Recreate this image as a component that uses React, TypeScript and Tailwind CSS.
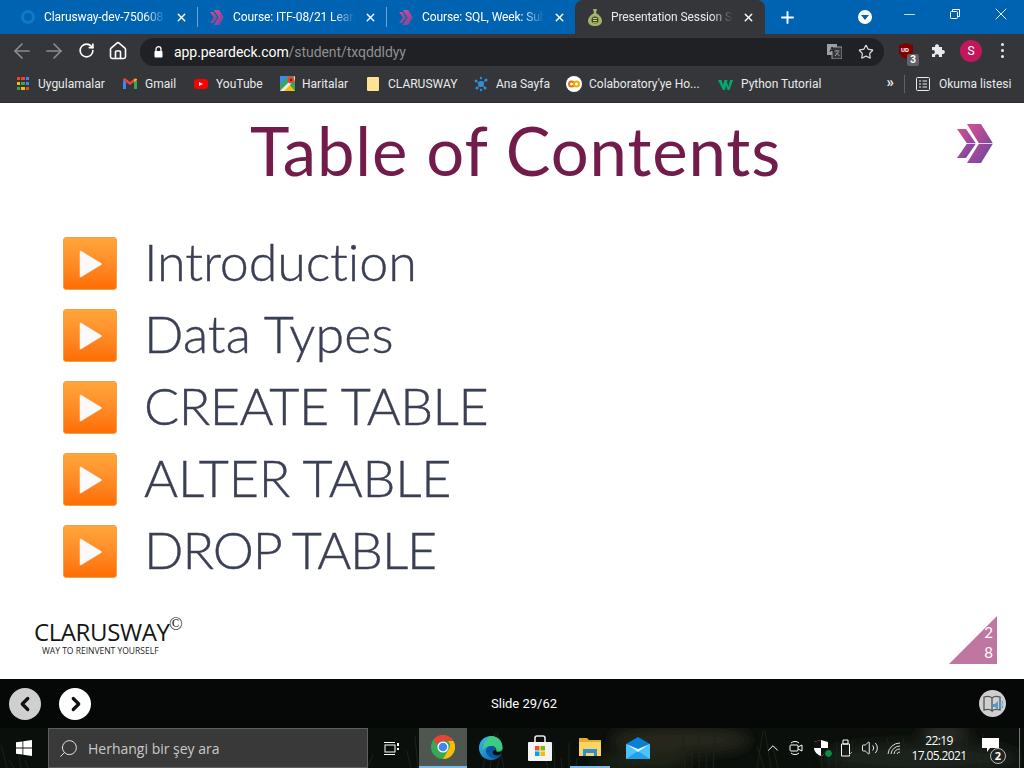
import React from "react";
import { ChevronLeft, ChevronRight, Search, ChevronUp, Volume2, Minus, Plus, X, Star, ArrowLeft, ArrowRight, RotateCw, Home } from "lucide-react";

const ui = { fontFamily: 'Roboto,"Open Sans",sans-serif' };
const deck = { fontFamily: 'Lato,"Open Sans",sans-serif' };

function Chevrons({ w = 14, h = 14, id, line }: { w?: number; h?: number; id: string; line?: boolean }) {
  return (
    <svg width={w} height={h} viewBox="0 0 36 39">
      <defs>
        <linearGradient id={id} x1="0" y1="0" x2="1" y2="1">
          <stop offset="0" stopColor="#d94f92" />
          <stop offset="0.5" stopColor="#a04a9c" />
          <stop offset="1" stopColor="#5c4a9e" />
        </linearGradient>
      </defs>
      <path d="M0 5h9l10 14.500-10 14.500H0l10-14.500z" fill={`url(#${id})`} />
      <path d="M10 0h14l12 19.500-12 19.500H10l12-19.500z" fill={`url(#${id})`} />
      {line && <path d="M2 19.500h34" stroke="#fff" strokeWidth="0.9" opacity="0.85" />}
    </svg>
  );
}

function Tab({ icon, title, width, divider, active }: { icon: React.ReactNode; title: string; width: string; divider?: boolean; active?: boolean }) {
  return (
    <div className={`relative flex items-center h-full shrink-0 ${width} ${active ? "bg-[#35363a] rounded-t-[8px] text-[#e8eaed]" : "text-white"}`}>
      <div className="w-[16px] h-[16px] flex items-center justify-center shrink-0">{icon}</div>
      <div className="ml-[8px] text-[12px] tracking-[-0.1px] whitespace-nowrap overflow-hidden w-[122px] [mask-image:linear-gradient(to_right,black_82%,transparent)]">{title}</div>
      <X size={13} strokeWidth={2.6} className="ml-[9px] shrink-0 text-white" />
      {divider && <div className="absolute right-0 top-[7px] w-px h-[20px] bg-[#6fa3d1]" />}
    </div>
  );
}

function Bookmark({ icon, label, w }: { icon: React.ReactNode; label: string; w: string }) {
  return (
    <div className={`flex items-center shrink-0 ${w}`}>
      <div className="w-[16px] h-[16px] flex items-center justify-center shrink-0">{icon}</div>
      <span className="ml-[7px] text-[12px] text-[#e8eaed] whitespace-nowrap">{label}</span>
    </div>
  );
}

function AppsIcon() {
  const c = ["#ea4335", "#ea4335", "#4285f4", "#fbbc04", "#34a853", "#4285f4", "#34a853", "#fbbc04", "#ea4335"];
  return (
    <div className="grid grid-cols-3 gap-[1.500px] w-[13px] h-[13px]">
      {c.map((x, i) => (
        <div key={i} style={{ background: x }} />
      ))}
    </div>
  );
}

function GmailIcon() {
  return (
    <svg width="14" height="11" viewBox="0 0 14 11">
      <path d="M0 2v9h3V4z" fill="#4285f4" />
      <path d="M14 2v9h-3V4z" fill="#34a853" />
      <path d="M0 2l7 5 7-5V1l-2-1-5 4-5-4-2 1z" fill="#ea4335" />
      <path d="M11 1l3 0v1l-3 2z" fill="#fbbc04" />
    </svg>
  );
}

function MapsIcon() {
  return (
    <svg width="15" height="15" viewBox="0 0 15 15">
      <rect width="15" height="15" rx="1" fill="#34a853" />
      <path d="M0 15L8 7l7 8z" fill="#fbbc04" />
      <path d="M0 0h9L0 9z" fill="#4285f4" opacity="0.9" />
      <path d="M0 15l15-15v4L4 15z" fill="#e8eaed" />
      <circle cx="11" cy="4" r="3.400" fill="#ea4335" />
      <circle cx="11" cy="4" r="1.200" fill="#7a1c14" />
    </svg>
  );
}

function ChromeIcon() {
  return (
    <svg width="24" height="24" viewBox="0 0 24 24">
      <circle cx="12" cy="12" r="12" fill="#34a853" />
      <path d="M12 0a12 12 0 0 1 10.400 6H12a6 6 0 0 0-5.600 3.800L2.300 4.900A12 12 0 0 1 12 0z" fill="#ea4335" />
      <path d="M22.400 6A12 12 0 0 1 12 24l5.200-9a6 6 0 0 0-.2-9z" fill="#fbbc04" />
      <circle cx="12" cy="12" r="5.600" fill="#fff" />
      <circle cx="12" cy="12" r="4.300" fill="#4285f4" />
    </svg>
  );
}

function EdgeIcon() {
  return (
    <svg width="24" height="24" viewBox="0 0 24 24">
      <defs>
        <linearGradient id="edgeG" x1="0" y1="0" x2="1" y2="1">
          <stop offset="0" stopColor="#35c1f1" />
          <stop offset="1" stopColor="#0c59a4" />
        </linearGradient>
      </defs>
      <path d="M12 0C5 0 0 5.500 0 12c0 7 5.500 12 12 12 3 0 6-1 8-3-4 1.500-10 0-11-5-.7-3.500 2-6 5-6 2.500 0 3.500 1.500 3.500 3h6C24 5 18.500 0 12 0z" fill="url(#edgeG)" />
      <path d="M12.500 0C18.500 0 24 5 23.500 13c-.2 2-3 3.200-6 2.500 0-3-1.500-5.500-5-5.500C8 10 5 12 3.500 14 4 7 8 1 12.500 0z" fill="#41d07b" opacity="0.9" />
      <path d="M12 10c-3 0-5.700 2.500-5 6 1 5 9 8 13 5 1-1 2-2 2.400-3-3 2-7 2-8.400-.5-1-2 0-3.500 3-3.500 0-2-2-4-5-4z" fill="#0b57a4" />
    </svg>
  );
}

function StoreIcon() {
  return (
    <svg width="24" height="26" viewBox="0 0 24 26">
      <path d="M7 7V3a2 2 0 0 1 2-2h6a2 2 0 0 1 2 2v4" fill="none" stroke="#e8e8e8" strokeWidth="1.600" />
      <rect x="0" y="7" width="24" height="19" rx="1" fill="#f4f4f4" />
      <rect x="7" y="11" width="4.500" height="4.500" fill="#f25022" />
      <rect x="12.500" y="11" width="4.500" height="4.500" fill="#7fba00" />
      <rect x="7" y="16.500" width="4.500" height="4.500" fill="#00a4ef" />
      <rect x="12.500" y="16.500" width="4.500" height="4.500" fill="#ffb900" />
    </svg>
  );
}

function ExplorerIcon() {
  return (
    <svg width="22" height="20" viewBox="0 0 22 20">
      <path d="M0 1h8l2 2h12v15H0z" fill="#e8a92c" />
      <path d="M0 5h22v14H0z" fill="#fcd462" />
      <path d="M4 12h14v7h-3v-3H7v3H4z" fill="#2a8fd8" />
    </svg>
  );
}

function MailIcon() {
  return (
    <svg width="24" height="22" viewBox="0 0 24 22">
      <path d="M0 7L12 0l12 7v15H0z" fill="#0a7fd6" />
      <path d="M0 7l12 8 12-8v15H0z" fill="#4cc2ff" />
      <path d="M0 22l12-8 12 8z" fill="#1fa1ec" />
      <path d="M0 7l12 8 12-8-12 5z" fill="#e4f6ff" />
    </svg>
  );
}

function PlayBox() {
  return (
    <div className="w-[54px] h-[53px] rounded-[3px] border border-[#f2a04a] bg-gradient-to-b from-[#ffa63b] to-[#ff6e00] flex items-center justify-center shrink-0">
      <svg width="24" height="28" viewBox="0 0 24 28" className="ml-[2px]">
        <path d="M1.500 1.500L22 14 1.500 26.500z" fill="#fafafa" stroke="#fafafa" strokeLinejoin="round" strokeWidth="1.500" />
      </svg>
    </div>
  );
}

const grass = Array.from({ length: 70 }, (_, i) => {
  const x = (i * 137) % 1024;
  const h = 8 + ((i * 53) % 30);
  const lean = ((i * 29) % 14) - 7;
  return { x, h, lean };
});

function Wallpaper() {
  return (
    <svg className="absolute inset-0 w-full h-full" viewBox="0 0 1024 40" preserveAspectRatio="none">
      <defs>
        <filter id="soft" x="-20%" y="-50%" width="140%" height="200%">
          <feGaussianBlur stdDeviation="7" />
        </filter>
      </defs>
      <rect width="1024" height="40" fill="#0b0f0b" />
      <g filter="url(#soft)">
        <ellipse cx="680" cy="12" rx="70" ry="14" fill="#25261e" />
        <ellipse cx="640" cy="34" rx="50" ry="10" fill="#1c2014" />
        <ellipse cx="920" cy="30" rx="100" ry="16" fill="#1f211c" />
        <ellipse cx="945" cy="4" rx="24" ry="8" fill="#2e302a" />
      </g>
      {grass.map((g, i) => (
        <path key={i} d={`M${g.x} 40 L${g.x + g.lean} ${40 - g.h}`} stroke="#1a2516" strokeWidth="1" />
      ))}
    </svg>
  );
}

const rows = [
  { t: "Introduction", cls: "tracking-[-0.1px]" },
  { t: "Data Types", cls: "tracking-[0.1px]" },
  { t: "CREATE TABLE", cls: "tracking-[-0.5px]" },
  { t: "ALTER TABLE", cls: "tracking-[-0.2px]" },
  { t: "DROP TABLE", cls: "tracking-[-1.100px]" },
];

export default function App() {
  return (
    <div className="w-[1024px] h-[768px] overflow-hidden flex flex-col bg-white" style={ui}>
      {/* tab strip */}
      <div className="h-[34px] bg-[#0063b1] flex items-stretch shrink-0 text-white">
        <Tab
          width="w-[198px] pl-[20px]"
          divider
          title="Clarusway-dev-750608"
          icon={<div className="w-[14px] h-[14px] rounded-full border-[3px] border-[#0a7cc8] bg-[#0063b1]" />}
        />
        <Tab width="w-[189px] pl-[11px]" divider title="Course: ITF-08/21 Learn" icon={<Chevrons id="c1" w={14} h={15} />} />
        <Tab width="w-[188px] pl-[11px]" title="Course: SQL, Week: Sub" icon={<Chevrons id="c2" w={14} h={15} />} />
        <Tab
          active
          width="w-[190px] pl-[12px]"
          title="Presentation Session Stu"
          icon={
            <svg width="14" height="17" viewBox="0 0 14 17">
              <path d="M5 0h4L8 4c4 2 6 5 6 8 0 3-3 5-7 5s-7-2-7-5c0-3 2-6 6-8z" fill="#a8b06a" />
              <circle cx="7" cy="11" r="3.500" fill="#3d4a24" />
              <path d="M5 9h4v1H5zM5 11h4v1H5zM5 13h4v.8H5z" fill="#c9cf8c" />
            </svg>
          }
        />
        <div className="w-[44px] flex items-center justify-center">
          <Plus size={19} strokeWidth={2.400} />
        </div>
        <div className="w-[56px] ml-[28px] flex items-center justify-center">
          <div className="w-[14px] h-[14px] rounded-full bg-white flex items-center justify-center">
            <div className="w-0 h-0 border-l-[4px] border-r-[4px] border-t-[5px] border-l-transparent border-r-transparent border-t-[#0063b1]" />
          </div>
        </div>
        <div className="flex-1 flex items-start ml-[-7px]">
          <div className="w-[46px] h-[28px] flex items-center justify-center shrink-0"><Minus size={17} strokeWidth={1.100} /></div>
          <div className="w-[46px] h-[28px] flex items-center justify-center shrink-0">
            <svg width="10" height="10" viewBox="0 0 10 10" fill="none" stroke="#fff">
              <path d="M2.500 2.500V.5h7v7h-2" />
              <rect x=".5" y="2.500" width="7" height="7" rx="1" />
            </svg>
          </div>
          <div className="w-[46px] h-[28px] flex items-center justify-center shrink-0"><X size={20} strokeWidth={1.100} /></div>
        </div>
      </div>

      {/* toolbar */}
      <div className="h-[33px] bg-[#35363a] flex items-center shrink-0 text-[#e8eaed]">
        <div className="w-[44px] flex justify-center"><ArrowLeft size={24} strokeWidth={1.700} className="text-[#8b8c8f] shrink-0" /></div>
        <div className="w-[20px] flex justify-center"><ArrowRight size={24} strokeWidth={1.700} className="text-[#8b8c8f] shrink-0" /></div>
        <div className="w-[44px] flex justify-center"><RotateCw size={17} strokeWidth={2.300} className="text-white shrink-0" /></div>
        <div className="w-[20px] flex justify-center"><Home size={20} strokeWidth={1.900} className="text-white shrink-0" /></div>
        <div className="ml-[12px] w-[744px] h-[28px] mt-[2px] rounded-full bg-[#202124] flex items-center">
          <svg width="9" height="12" viewBox="0 0 9 12" className="ml-[14px] shrink-0">
            <path d="M2 5V3.200a2.500 2.500 0 0 1 5 0V5" fill="none" stroke="#fff" strokeWidth="1.300" />
            <rect x="0.500" y="5" width="8" height="6.500" rx="0.800" fill="#fff" />
          </svg>
          <div className="ml-[11px] mt-[1px] text-[14px] tracking-[-0.06px] whitespace-nowrap">
            <span className="text-white">app.peardeck.com</span>
            <span className="text-[#8e9094]">/student/txqddldyy</span>
          </div>
          <div className="ml-auto flex items-center">
            <svg width="15" height="15" viewBox="0 0 15 15" className="mr-[16px]">
              <rect x="0" y="0" width="10" height="11" fill="#9aa0a6" />
              <rect x="5" y="3" width="10" height="12" fill="#35363a" stroke="#9aa0a6" />
              <path d="M3 8l2-5 2 5M4 6.500h2" stroke="#202124" fill="none" />
              <path d="M7.500 7h5M10 6v1M8 12l3.500-4M9 8.500l3.500 3.500" stroke="#9aa0a6" fill="none" />
            </svg>
            <Star size={16} strokeWidth={1.800} className="text-[#dadce0] mr-[10px]" />
          </div>
        </div>
        <div className="relative w-[16px] h-[16px] ml-[15px]">
          <svg width="14" height="16" viewBox="0 0 14 16">
            <path d="M0 2l7-2 7 2v6c0 4-4 7-7 8-3-1-7-4-7-8z" fill="#800000" />
          </svg>
          <span className="absolute left-[2px] top-[2px] text-[6px] font-bold text-white leading-[10px]">UD</span>
          <span className="absolute left-[8px] top-[11px] w-[12px] h-[12px] rounded-[2px] bg-[#5f6368] text-white text-[10px] font-bold leading-[12px] text-center">3</span>
        </div>
        <svg width="15" height="15" viewBox="0 0 15 15" className="ml-[16px] shrink-0" fill="#e8eaed">
          <path d="M1 4h3.200a2 2 0 1 1 3.600 0H11v3.200a2 2 0 1 1 0 3.600V14H7.800a2 2 0 1 0-3.600 0H1v-3.200a2 2 0 1 0 0-3.600z" />
        </svg>
        <div className="ml-[14px] w-[22px] h-[22px] rounded-full bg-[#c2185b] flex items-center justify-center text-white text-[12px]">S</div>
        <div className="ml-[19px] flex flex-col gap-[3px]">
          <div className="w-[3px] h-[3px] rounded-full bg-[#e8eaed]" />
          <div className="w-[3px] h-[3px] rounded-full bg-[#e8eaed]" />
          <div className="w-[3px] h-[3px] rounded-full bg-[#e8eaed]" />
        </div>
      </div>

      {/* bookmarks */}
      <div className="h-[36px] bg-[#35363a] border-b border-[#2a2b2e] flex items-center shrink-0 pl-[15px] pb-[2px]">
        <Bookmark w="w-[107px]" label="Uygulamalar" icon={<AppsIcon />} />
        <Bookmark w="w-[71px]" label="Gmail" icon={<GmailIcon />} />
        <Bookmark w="w-[86px]" label="YouTube" icon={<div className="w-[14px] h-[10px] rounded-[3px] bg-[#f00] flex items-center justify-center"><div className="w-0 h-0 border-y-[2.500px] border-l-[4px] border-y-transparent border-l-white" /></div>} />
        <Bookmark w="w-[86px]" label="Haritalar" icon={<MapsIcon />} />
        <Bookmark w="w-[108px]" label="CLARUSWAY" icon={<div className="w-[12px] h-[14px] bg-[#fde293] rounded-[1px]" />} />
        <Bookmark w="w-[93px]" label="Ana Sayfa" icon={
          <svg width="16" height="16" viewBox="0 0 16 16"><g fill="#2f8fd8"><circle cx="8" cy="8" r="3" /><circle cx="3" cy="5" r="1.500" /><circle cx="13" cy="4" r="1.500" /><circle cx="4" cy="12" r="1.500" /><circle cx="12" cy="12" r="1.500" /><circle cx="8" cy="2" r="1.200" /><circle cx="8" cy="14" r="1.200" /><path d="M3 5l10 7M13 4L4 12" stroke="#2f8fd8" /></g></svg>
        } />
        <Bookmark w="w-[152px]" label="Colaboratory'ye Ho..." icon={
          <div className="w-[16px] h-[16px] rounded-full bg-white flex items-center justify-center">
            <svg width="12" height="8" viewBox="0 0 12 8" fill="none" strokeWidth="2"><circle cx="3.500" cy="4" r="2.500" stroke="#e8710a" /><circle cx="8.500" cy="4" r="2.500" stroke="#f9ab00" /></svg>
          </div>
        } />
        <Bookmark w="w-[110px]" label="Python Tutorial" icon={
          <svg width="16" height="12" viewBox="0 0 16 12"><path d="M0 2h3.500l1.500 5 1.500-5h3L7 12H5zM8 7l1-3 1.500 5L12 2h3l-3.500 10h-2z" fill="#04aa6d" /></svg>
        } />
        <span className="ml-auto text-[15px] font-bold text-[#e8eaed] leading-none mb-[2px]">»</span>
        <div className="ml-[10px] w-px h-[18px] bg-[#5f6368]" />
        <svg width="14" height="14" viewBox="0 0 14 14" fill="none" stroke="#e8eaed" className="ml-[11px]">
          <rect x=".5" y=".5" width="13" height="13" rx="1" />
          <path d="M3 4h2M6.500 4H11M3 7h2M6.500 7H11M3 10h2M6.500 10H11" />
        </svg>
        <span className="ml-[9px] mr-[14px] w-[71px] text-[12px] text-[#e8eaed] whitespace-nowrap">Okuma listesi</span>
      </div>

      {/* slide */}
      <div className="relative h-[576px] bg-white shrink-0 flex flex-col" style={deck}>
        <h1 className="text-center text-[#721c4c] text-[67px] leading-[80px] mt-[7px] pl-[7px] font-normal tracking-[0.9px]">Table of Contents</h1>
        <div className="absolute left-[957px] top-[21px]"><Chevrons id="c3" w={36} h={39} line /></div>
        <div className="mt-[47px] ml-[63px] flex flex-col gap-[19px]">
          {rows.map((r) => (
            <div key={r.t} className="flex items-center h-[53px]">
              <PlayBox />
              <span className={`ml-[27px] mb-[6px] text-[#3b3f55] text-[52px] leading-[54px] font-light whitespace-nowrap [-webkit-text-stroke:0.4px_#3b3f55] ${r.cls}`}>{r.t}</span>
            </div>
          ))}
        </div>
        <div className="mt-auto flex items-end justify-between pl-[34px] pr-[27px] pb-[15px]">
          <div className="relative mb-[8px]" style={{ fontFamily: '"Open Sans",sans-serif' }}>
            <div className="text-[24px] leading-[24px] text-[#151515] tracking-[-0.4px]">CLARUSWAY<span className="absolute left-[135px] top-[-5px] text-[18px] leading-[18px]" style={{ fontFamily: '"Liberation Serif",serif' }}>©</span></div>
            <div className="ml-[8px] mt-[2px] text-[8.500px] leading-[10px] text-[#222] whitespace-nowrap">WAY TO REINVENT YOURSELF</div>
          </div>
          <div className="relative w-[48px] h-[48px] bg-[#bf76a0] [clip-path:polygon(100%_0,100%_100%,0_100%)]">
            <div className="absolute right-[4px] top-[6px] text-white text-[15px] leading-[20px] w-[9px] text-center">2 8</div>
          </div>
        </div>
      </div>

      {/* player bar */}
      <div className="h-[49px] bg-[#060808] flex items-center shrink-0 relative pl-[9px]">
        <div className="w-[32px] h-[32px] rounded-full bg-[#cfcfcf] flex items-center justify-center">
          <ChevronLeft size={22} strokeWidth={3.500} className="text-[#111] mr-[1px]" />
        </div>
        <div className="ml-[18px] w-[32px] h-[32px] rounded-full bg-white flex items-center justify-center">
          <ChevronRight size={22} strokeWidth={3.500} className="text-[#111] ml-[1px]" />
        </div>
        <div className="ml-[400px] text-white text-[13px] whitespace-nowrap">Slide 29/62</div>
        <div className="absolute left-[979px] top-[11px] w-[27px] h-[27px] rounded-full bg-[#cfcfcf] flex items-center justify-center">
          <svg width="20" height="18" viewBox="0 0 20 18" fill="none">
            <path d="M1 2c3-1 6-1 8 1v13c-2-2-5-2-8-1zM9 3c2-2 5-2 8-1v13c-3-1-6-1-8 1" stroke="#555" strokeWidth="1.300" />
            <path d="M10 9h2l3-3v9l-3-3h-2z" fill="#4a9ad4" />
            <path d="M17 7c1 1.500 1 3.500 0 5M19 6c1.500 2 1.500 5 0 7" stroke="#4a9ad4" strokeWidth="1.200" />
          </svg>
        </div>
      </div>

      {/* taskbar */}
      <div className="relative h-[40px] shrink-0 flex items-stretch text-white" style={{ fontFamily: '"Open Sans",sans-serif' }}>
        <Wallpaper />
        <div className="relative flex items-stretch w-full">
          <div className="w-[48px] flex items-center justify-center">
            <svg width="16" height="16" viewBox="0 0 16 16" fill="#fff"><path d="M0 2.300l6.500-.9v6.200H0zM7.300 1.300L16 0v7.600H7.300zM0 8.400h6.500v6.200L0 13.700zM7.300 8.400H16V16l-8.700-1.200z" /></svg>
          </div>
          <div className="w-[320px] bg-[#393939] border border-[#5e5e5e] flex items-center pl-[9px]">
            <Search size={21} strokeWidth={1.100} className="text-[#e6e6e6] -scale-x-100" />
            <span className="ml-[9px] text-[14px] text-[#c9c9c9]">Herhangi bir şey ara</span>
          </div>
          <div className="w-[48px] flex items-center justify-center">
            <svg width="16" height="15" viewBox="0 0 16 15" fill="none" stroke="#fff"><rect x="1" y="4" width="10" height="7" /><path d="M0 1.500h11M0 13.500h11" /><path d="M14 2v3M14 7v2" strokeWidth="2" /></svg>
          </div>
          <div className="w-[3px]" />
          <div className="w-[48px] bg-[#4f564f] border-b-[2px] border-[#76b9ed] flex items-center justify-center"><ChromeIcon /></div>
          <div className="w-[48px] flex items-center justify-center"><EdgeIcon /></div>
          <div className="w-[50px] flex items-center justify-center"><StoreIcon /></div>
          <div className="w-[40px] ml-[5px] mr-[3px] border-b-[2px] border-[#76b9ed] flex items-center justify-center"><ExplorerIcon /></div>
          <div className="w-[50px] flex items-center justify-center"><MailIcon /></div>
          <div className="ml-[101px] flex items-center">
            <ChevronUp size={18} strokeWidth={1.300} />
            <svg width="16" height="18" viewBox="0 0 16 18" fill="none" stroke="#fff" strokeWidth="1" className="ml-[6px]">
              <path d="M3 4a6 6 0 0 1 8 0M3 14a6 6 0 0 0 8 0" />
              <rect x="2" y="6" width="8" height="6" rx="1" />
              <path d="M10 8l4-2v6l-4-2" />
            </svg>
            <div className="relative ml-[10px] w-[16px] h-[16px]">
              <svg width="14" height="16" viewBox="0 0 14 16"><path d="M0 2l7-2 7 2v6c0 4-4 7-7 8-3-1-7-4-7-8z" fill="#fff" /><path d="M7 0v8H0V2zM7 8h7c0 4-4 7-7 8z" fill="#111" /></svg>
              <div className="absolute right-[-3px] bottom-[-2px] w-[9px] h-[9px] rounded-full bg-[#0f8a45] border border-[#0b0f0b]" />
            </div>
            <svg width="13" height="18" viewBox="0 0 13 18" fill="none" stroke="#fff" strokeWidth="1" className="ml-[10px]">
              <path d="M3 1h5v4H3zM1.500 5h8v12h-8z" />
              <path d="M9 16l3-3" stroke="#999" />
            </svg>
            <Volume2 size={18} strokeWidth={1.200} className="ml-[8px]" />
            <svg width="16" height="14" viewBox="0 0 16 14" fill="none" stroke="#ddd" className="ml-[8px]"><path d="M1 13A12 12 0 0 1 13 2M4 13a9 9 0 0 1 9-8M7 13a6 6 0 0 1 6-5M10 13a3 3 0 0 1 3-2" /></svg>
          </div>
          <div className="w-[70px] ml-[1px] text-center text-[12px] leading-[15px] self-center whitespace-nowrap tracking-[-0.6px]">
            <div>22:19</div>
            <div>17.05.2021</div>
          </div>
          <div className="relative ml-[5px] w-[22px] flex items-center justify-center">
            <svg width="17" height="14" viewBox="0 0 17 14" fill="#fff" className="mb-[6px]"><path d="M0 0h17v10h-9l-3 4v-4H0z" /></svg>
            <div className="absolute left-[11px] top-[20px] w-[16px] h-[16px] rounded-full border border-[#bbb] bg-[#222] text-[11px] leading-[14px] text-center text-white font-bold">2</div>
          </div>
        </div>
        <div className="absolute right-[4px] top-0 bottom-0 w-px bg-[#777]" />
      </div>
    </div>
  );
}
